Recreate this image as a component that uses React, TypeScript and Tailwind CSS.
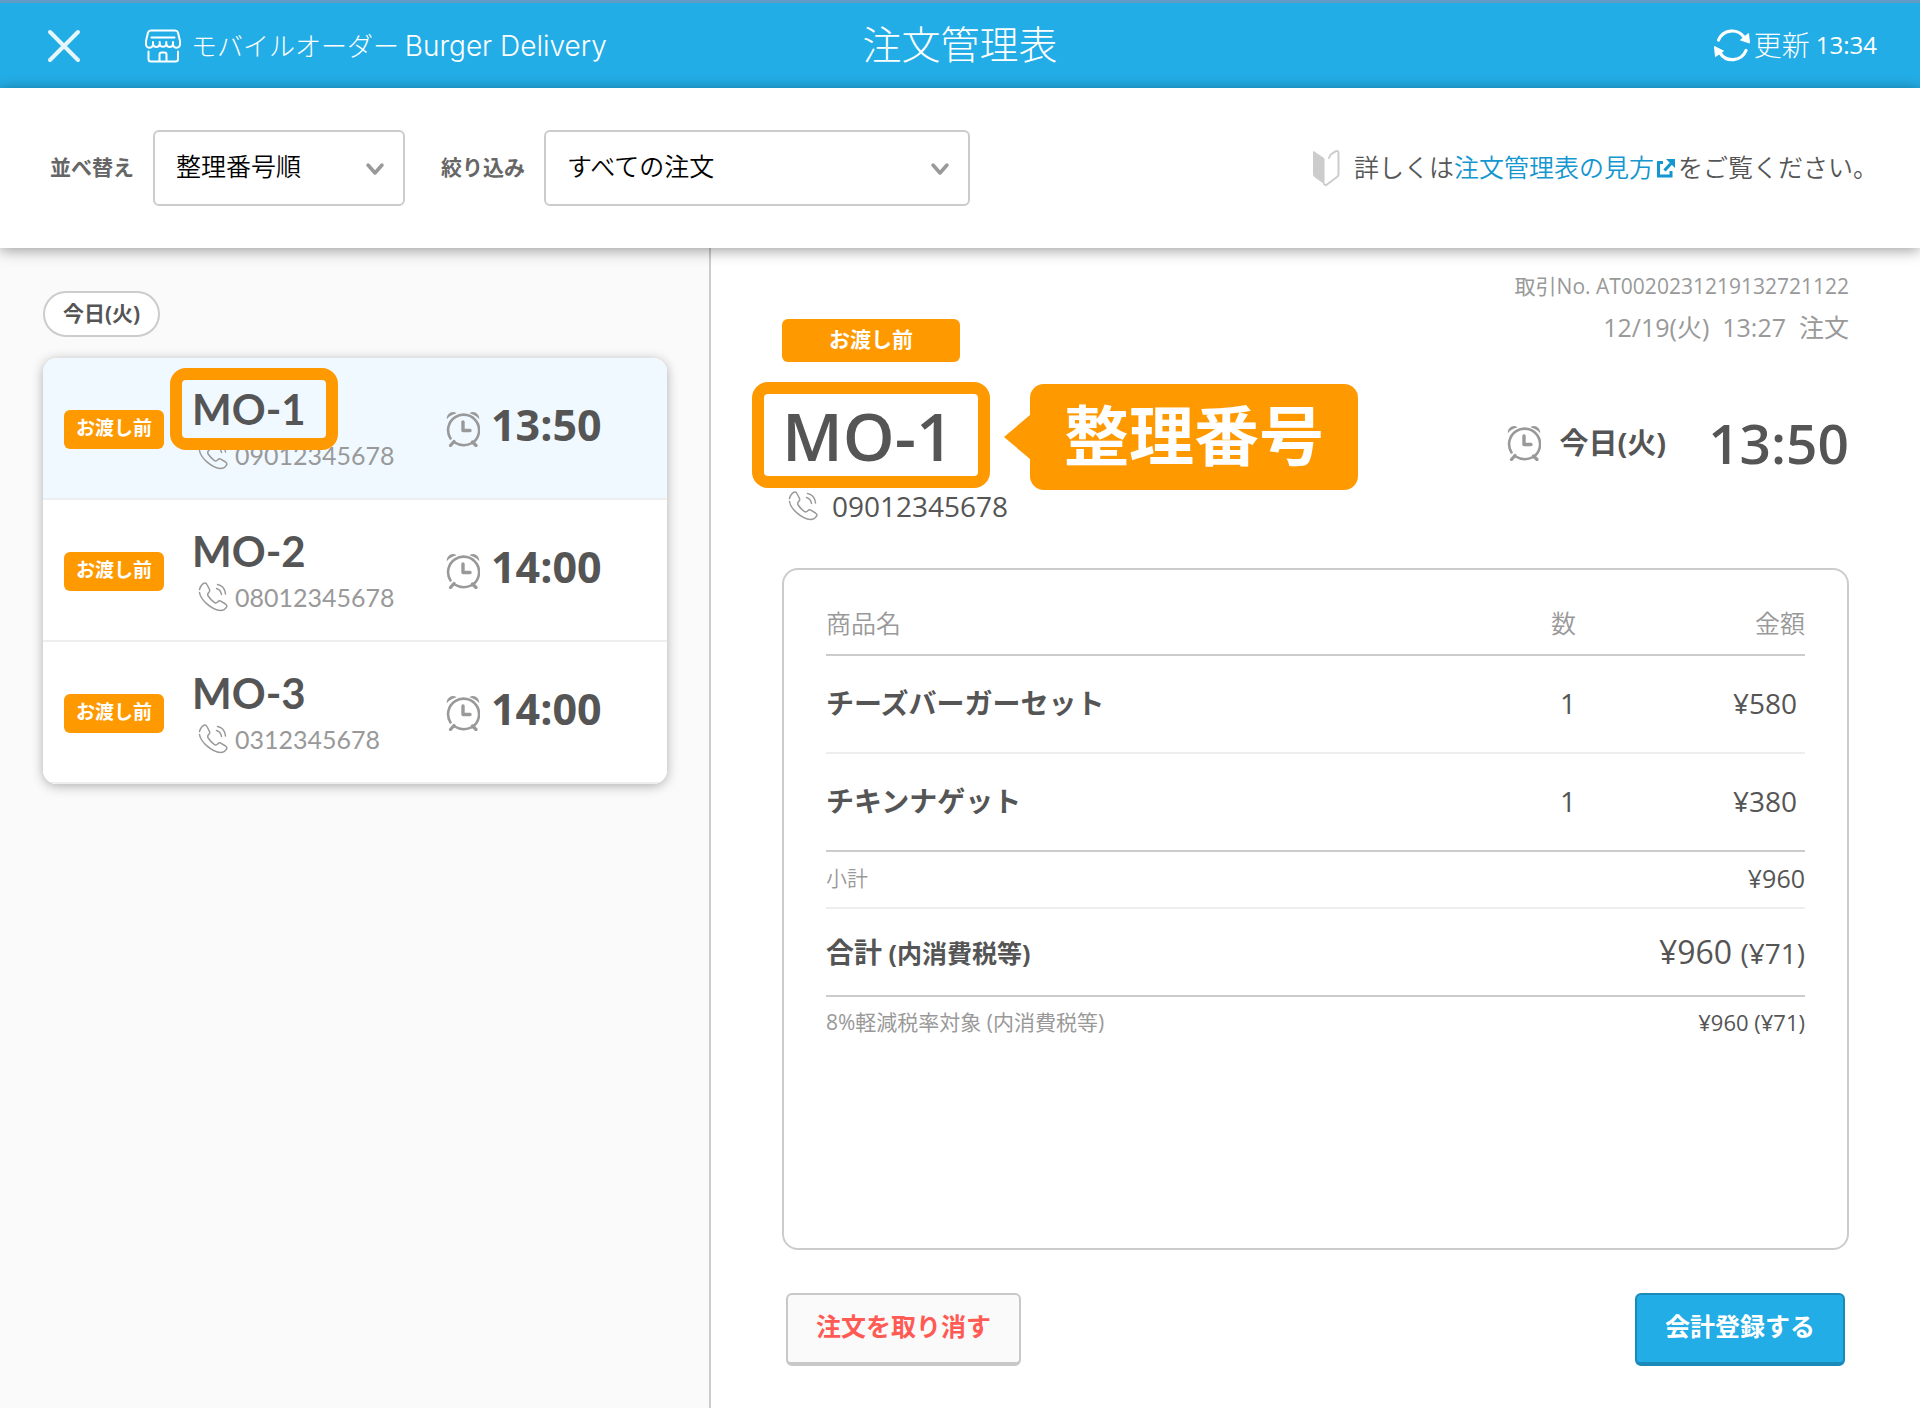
import { useState, type ReactNode } from 'react';
import clsx from 'clsx';

type Order = {
  id: string;
  status: string;
  phone: string;
  time: string;
  highlighted?: boolean;
};

type Item = {
  name: string;
  count: number;
  price: number;
};

const orders: Order[] = [
  { id: 'MO-1', status: 'お渡し前', phone: '09012345678', time: '13:50', highlighted: true },
  { id: 'MO-2', status: 'お渡し前', phone: '08012345678', time: '14:00' },
  { id: 'MO-3', status: 'お渡し前', phone: '0312345678', time: '14:00' },
];

const items: Item[] = [
  { name: 'チーズバーガーセット', count: 1, price: 580 },
  { name: 'チキンナゲット', count: 1, price: 380 },
];

function CloseIcon() {
  return (
    <svg viewBox="0 0 34 34" className="w-[34px] h-[34px]" fill="none" stroke="#e6f6fd" strokeWidth="4" strokeLinecap="round">
      <path d="M3 3l28 28M31 3L3 31" />
    </svg>
  );
}

function StoreIcon() {
  return (
    <svg viewBox="0 0 36 34" className="w-9 h-[34px]" fill="none" stroke="white" strokeWidth="2" strokeLinecap="round" strokeLinejoin="round">
      <path d="M6 1.500h24c1.500 0 2.500.6 3 2l2 8.500v3a3.500 3.500 0 0 1-7 .5 3.500 3.500 0 0 1-6.700 0 3.500 3.500 0 0 1-6.600 0 3.500 3.500 0 0 1-6.700 0 3.500 3.500 0 0 1-7-.5V12l2-8.500c.5-1.400 1.500-2 3-2z" />
      <path d="M6.500 8.500h23M8 15.500v-2.500M14.700 15.500v-2.500M21.300 15.500v-2.500M28 15.500v-2.500" />
      <path d="M3.500 22.500V30a2.500 2.500 0 0 0 2.500 2.500h24.500a2.500 2.500 0 0 0 2.500-2.500v-7.500" />
      <path d="M14.500 32v-6.500a2 2 0 0 1 2-2h3a2 2 0 0 1 2 2V32" />
    </svg>
  );
}

function RefreshIcon() {
  return (
    <svg viewBox="0 0 36 34" className="w-9 h-[34px]">
      <g fill="none" stroke="white" strokeWidth="3.200" strokeLinecap="round">
        <path d="M4.500 12A14.800 14.800 0 0 1 30 9" />
        <path d="M32 22.500A14.800 14.800 0 0 1 6 25" />
      </g>
      <path d="M34.500 5.500L35.500 15L26.500 12zM1.500 28.500L.5 18.500L9.500 23z" fill="white" stroke="white" strokeLinejoin="round" />
    </svg>
  );
}

function BeginnerIcon() {
  return (
    <svg viewBox="0 0 28 38" className="w-7 h-[38px]">
      <path d="M1.500 2.500L12 9.500v25L3 28c-1-.8-1.500-1.500-1.500-3z" fill="#ccc" stroke="#ccc" strokeLinejoin="round" />
      <path d="M12 35l2 1.300L25 28c1-.8 1.500-1.600 1.500-3V4c0-1.800-1.500-2.600-3-1.600L19.500 5q-1.500 1-2.500 4" fill="none" stroke="#ccc" strokeWidth="2" strokeLinecap="round" strokeLinejoin="round" />
    </svg>
  );
}

function ExternalIcon() {
  return (
    <svg viewBox="0 0 20 20" className="inline-block w-5 h-5 ml-[2px] mr-[2px] -mt-1">
      <path d="M7 4.500H2.500v13.500H15V13" fill="none" stroke="#1496cf" strokeWidth="3" />
      <path d="M8.500 12.500L15 5.500" stroke="#1496cf" strokeWidth="3.200" />
      <path d="M10 1h9v9z" fill="#1496cf" />
    </svg>
  );
}

function AlarmIcon() {
  return (
    <svg viewBox="0 0 34 36" className="w-[34px] h-9 shrink-0" fill="none" stroke="#999" strokeLinecap="round">
      <path d="M4.500 27.500A15.500 15.500 0 1 1 26 32.200Q17 36.500 8.500 31.500" strokeWidth="2.600" />
      <path d="M8 30.500L4.500 34.500M26.500 31L30 34.500" strokeWidth="3.200" />
      <path d="M17 11v8.500h7" strokeWidth="3.400" strokeLinejoin="round" />
      <path d="M.8 8.200C.4 2.800 6 -1.200 10.600 2.200C6.500 3.200 3.500 5 .8 8.200zM33.200 8.200C33.600 2.800 28 -1.200 23.400 2.200C27.500 3.200 30.500 5 33.200 8.200z" fill="#999" stroke="none" />
    </svg>
  );
}

function PhoneIcon() {
  return (
    <svg viewBox="0 0 30 30" className="w-[30px] h-[30px] shrink-0" fill="none" stroke="#999" strokeWidth="1.500" strokeLinecap="round" strokeLinejoin="round">
      <path d="M1.500 7.500C2.500 4 4 2 6 1.200C7.500.8 8.500 1.500 9.200 3L11.500 7.500C12.200 9 11.500 9.800 10.500 10.800C9.500 11.800 9.500 12.800 10.200 14C11.800 16.500 14 18.800 16.200 20.400C17.400 21.200 18.600 21 19.600 20C20.600 18.800 21.800 18.500 23.200 19.300L27.500 22C29 23 29.200 24 28.500 25.200C27.500 27 25.500 28.500 22.500 28.500C14 28 2.500 18 1.500 10.500" />
      <path d="M18.500 6.500C21.500 7.300 23 9.500 23.500 12.500M19.500 2.500C24.500 3.500 27 7 27.500 12" />
    </svg>
  );
}

function SelectBox({ id, label, options, className }: { id: string; label: string; options: string[]; className: string }) {
  return (
    <div className="flex items-center gap-[19px]">
      <label htmlFor={id} className="text-[21px] font-bold text-[#666]">{label}</label>
      <div className={clsx('relative', className)}>
        <select id={id} className="appearance-none w-full h-[76px] pl-[21px] pr-14 pb-[2px] rounded-md border-2 border-[#ccc] bg-white text-[25px] font-[350] text-black">
          {options.map(option => <option key={option}>{option}</option>)}
        </select>
        <svg viewBox="0 0 20 14" className="absolute right-[20px] top-[32px] w-5 h-[14px] pointer-events-none" fill="none" stroke="#999" strokeWidth="3.500" strokeLinecap="round" strokeLinejoin="round">
          <path d="M3 3l7 8 7-8" />
        </svg>
      </div>
    </div>
  );
}

function OrderRow({ order, selected, onSelect }: { order: Order; selected: boolean; onSelect: () => void }) {
  return (
    <button
      type="button"
      onClick={onSelect}
      className={clsx('flex items-center w-full h-[142px] pt-[2px] pl-[21px] text-left border-b-2 border-[#eee]', selected ? 'bg-[#f0f9ff]' : 'bg-white')}
    >
      <span className="w-[100px] h-[39px] rounded-md bg-[#ff9900] text-white text-[19px] leading-[37px] font-bold text-center">
        {order.status}
      </span>
      <span className="w-[254px] ml-7 font-[Lato]">
        <span className="relative block text-[42px] leading-[52px] font-bold">
          {order.id}
          {order.highlighted && (
            <span className="absolute z-10 -left-[22px] -top-[15px] w-[168px] h-[82px] rounded-2xl border-12 border-[#ff9900]" />
          )}
        </span>
        <span className="flex items-center gap-[7px] pl-[6px] text-[25px] leading-[40px] text-[#999]">
          <PhoneIcon />
          {order.phone}
        </span>
      </span>
      <AlarmIcon />
      <span className="ml-[11px] pb-2 text-[43px] leading-[52px] font-bold">{order.time}</span>
    </button>
  );
}

function SummaryRow({ label, value, className }: { label: ReactNode; value: ReactNode; className: string }) {
  return (
    <tr className={className}>
      <th scope="row" colSpan={2} className="text-left">{label}</th>
      <td className="text-right text-[#555]">{value}</td>
    </tr>
  );
}

export default function App() {
  const [selectedId, setSelectedId] = useState('MO-1');

  const order = orders.find(o => o.id === selectedId) ?? orders[0];

  return (
    <div className="min-h-screen flex flex-col bg-white text-[#555] font-['Open_Sans','Noto_Sans_CJK_JP',sans-serif]">
      {/* Header */}
      <header className="grid grid-cols-[1fr_auto_1fr] items-center h-[88px] px-[43px] bg-[#23ade6] border-t-3 border-[#619bc8] text-white">
        <div className="flex items-center pl-1 font-['Noto_Sans_CJK_JP',sans-serif]">
          <button type="button" aria-label="閉じる"><CloseIcon /></button>
          <span className="flex ml-16"><StoreIcon /></span>
          <span className="ml-[10px] text-[26px] leading-[38px] font-light">
            モバイルオーダー <span className="font-[Inter] text-[28px]">Burger Delivery</span>
          </span>
        </div>
        <h1 className="pb-1 text-[39px] leading-[56px] font-light">注文管理表</h1>
        <button type="button" className="flex items-center justify-self-end pb-[2px] text-[28px] leading-[40px] font-light">
          <RefreshIcon />
          <span className="ml-1">更新</span>
          <span className="ml-[6px] text-[24px] font-normal">13:34</span>
        </button>
      </header>

      {/* Toolbar */}
      <div className="relative z-20 flex items-center h-[160px] pl-[50px] pr-10 bg-white shadow-[0_2px_14px_rgba(0,0,0,0.4)]">
        <SelectBox id="sort" label="並べ替え" options={['整理番号順', '受取時間順']} className="w-[252px]" />
        <div className="ml-9">
          <SelectBox id="filter" label="絞り込み" options={['すべての注文', 'お渡し前', 'お渡し済み']} className="w-[426px]" />
        </div>
        <p className="flex items-center ml-auto pr-[2px] text-[25px] leading-[38px]">
          <BeginnerIcon />
          <span className="ml-[14px] pb-[2px] font-[350]">
            詳しくは<a href="#guide" className="text-[#1496cf]">注文管理表の見方<ExternalIcon /></a>をご覧ください。
          </span>
        </p>
      </div>

      <div className="flex flex-1">
        {/* Order list */}
        <aside className="w-[711px] shrink-0 pt-[43px] pl-[43px] pr-[42px] bg-[#fafafa] border-r-2 border-[#ccc]">
          <h2 className="inline-block h-[46px] px-[18px] rounded-full border-2 border-[#ccc] bg-white text-[21px] leading-[40px] font-bold">
            今日(火)
          </h2>
          <div className="mt-[21px] rounded-[14px] overflow-hidden bg-white shadow-[0_2px_12px_rgba(0,0,0,0.3)]">
            {orders.map(o => (
              <OrderRow key={o.id} order={o} selected={o.id === selectedId} onSelect={() => setSelectedId(o.id)} />
            ))}
          </div>
        </aside>

        {/* Order detail */}
        <main className="flex-1 flex flex-col px-[71px] pb-[42px]">
          <div className="flex justify-between">
            <div className="pt-[71px]">
              <div className="w-[178px] h-[43px] rounded-md bg-[#ff9900] text-white text-[21px] leading-[40px] font-bold text-center">
                {order.status}
              </div>
              <div className="relative mt-5">
                <p className="text-[66px] leading-[106px] font-semibold">{order.id}</p>
                <span className="absolute -left-[30px] top-0 w-[238px] h-[106px] rounded-2xl border-12 border-[#ff9900]" />
                {/* Speech bubble pointing at the number */}
                <div className="absolute left-[222px] top-[2px] flex items-center">
                  <svg viewBox="0 0 26 44" className="w-[26px] h-11"><path d="M0 22L26 0v44z" fill="#ff9900" /></svg>
                  <span className="w-[328px] h-[106px] rounded-[14px] bg-[#ff9900] text-white text-[65px] leading-[102px] font-bold text-center whitespace-nowrap">
                    整理番号
                  </span>
                </div>
              </div>
              <p className="flex items-center gap-[14px] pl-[6px] text-[28px] leading-[36px]">
                <PhoneIcon />
                {order.phone}
              </p>
            </div>
            <div className="flex flex-col items-end pt-[23px]">
              <p className="text-[21px] leading-[30px] text-[#999]">取引No. AT0020231219132721122</p>
              <p className="mt-[11px] text-[25px] leading-[30px] text-[#999] whitespace-pre">12/19(火)  13:27  注文</p>
              <div className="flex items-center mt-[71px] leading-[60px]">
                <AlarmIcon />
                <span className="ml-[18px] text-[29px] font-bold">今日(火)</span>
                <span className="ml-[42px] text-[55px] font-semibold">{order.time}</span>
              </div>
            </div>
          </div>

          {/* Items */}
          <div className="flex-1 mt-[44px] pt-6 px-[42px] rounded-[16px] border-2 border-[#ccc]">
            <table className="w-full border-separate border-spacing-0">
              <thead>
                <tr className="text-[25px] text-[#999] *:h-[62px] *:font-[350] *:border-b-2 *:border-[#ccc]">
                  <th scope="col" className="text-left">商品名</th>
                  <th scope="col" className="w-[100px] text-right">数</th>
                  <th scope="col" className="w-[229px] text-right">金額</th>
                </tr>
              </thead>
              <tbody>
                {items.map((item, i) => (
                  <tr
                    key={item.name}
                    className={clsx('text-[28px] *:h-[98px] *:pb-[2px] *:border-b-2', i === items.length - 1 ? '*:border-[#ccc]' : '*:border-[#eee]')}
                  >
                    <td className="font-bold">{item.name}</td>
                    <td className="text-right">{item.count}</td>
                    <td className="pr-2 text-right">¥{item.price}</td>
                  </tr>
                ))}
                <SummaryRow
                  className="text-[21px] text-[#999] *:h-[57px] *:pb-[2px] *:font-[350] *:border-b-2 *:border-[#eee]"
                  label="小計"
                  value={<span className="text-[25px] font-normal">¥960</span>}
                />
                <SummaryRow
                  className="text-[25px] *:h-[88px] *:border-b-2 *:border-[#ccc]"
                  label={<><span className="text-[28px]">合計</span> (内消費税等)</>}
                  value={<><span className="text-[32px]">¥960 </span><span className="text-[28px]">(¥71)</span></>}
                />
                <SummaryRow
                  className="text-[21px] text-[#999] *:h-[52px] *:font-normal"
                  label="8%軽減税率対象 (内消費税等)"
                  value={<span className="text-[22px]">¥960 (¥71)</span>}
                />
              </tbody>
            </table>
          </div>

          {/* Actions */}
          <div className="flex justify-between mt-[43px] px-[4px] text-[25px] font-bold">
            <button type="button" className="h-[73px] px-7 pb-1 rounded-md border-2 border-b-4 border-[#c8c8c8] bg-[#fafafa] text-[#ff5a54]">
              注文を取り消す
            </button>
            <button type="button" className="h-[73px] px-7 pb-1 rounded-md border-2 border-b-4 border-[#1a8ab8] bg-[#23ade6] text-white">
              会計登録する
            </button>
          </div>
        </main>
      </div>
    </div>
  );
}
